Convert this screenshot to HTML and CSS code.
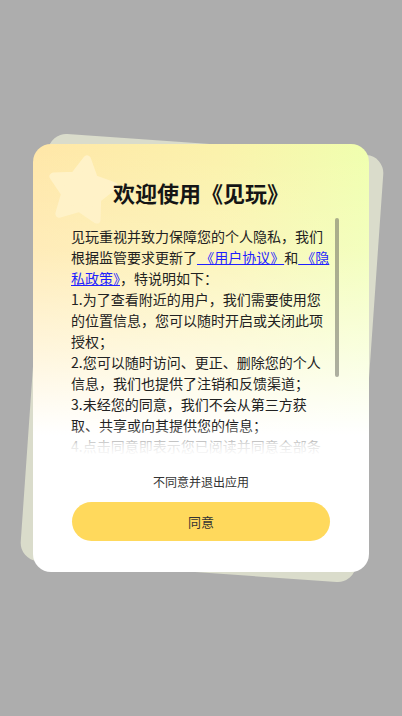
FILE: index.html
```html
<!DOCTYPE html>
<html lang="zh-CN">
<head>
<meta charset="utf-8">
<title>欢迎使用《见玩》</title>
<link rel="stylesheet" href="styles.css">
</head>
<body>
<div class="stage">
  <div class="card-back"></div>
  <div class="card">
    <svg class="star" width="90" height="90" viewBox="0 0 90 90" aria-hidden="true">
      <polygon transform="rotate(9 45 45)" points="45,13 55,31.25 75.4,35.1 61.2,50.25 63.8,70.9 45,62 26.2,70.9 28.8,50.25 14.6,35.1 35,31.25" fill="#fff2c8" stroke="#fff2c8" stroke-width="8" stroke-linejoin="round"/>
    </svg>
    <h1 class="title">欢迎使用《见玩》</h1>
    <div class="scroll">
      <div class="content">
        <p>见玩重视并致力保障您的个人隐私，我们根据监管要求更新了<a href="#" class="link"> 《用户协议》</a>和<a href="#" class="link"> 《隐私政策》</a>，特说明如下：</p>
        <p>1.为了查看附近的用户，我们需要使用您的位置信息，您可以随时开启或关闭此项授权；</p>
        <p>2.您可以随时访问、更正、删除您的个人信息，我们也提供了注销和反馈渠道；</p>
        <p>3.未经您的同意，我们不会从第三方获取、共享或向其提供您的信息；</p>
        <p>4.点击同意即表示您已阅读并同意全部条款。</p>
      </div>
      <div class="thumb"></div>
      <div class="fade"></div>
    </div>
    <div class="decline">不同意并退出应用</div>
    <button class="agree" type="button">同意</button>
  </div>
</div>
</body>
</html>
```
FILE: styles.css
```css
html, body {
  margin: 0;
  padding: 0;
}
body {
  background: #adadad;
  font-family: "Noto Sans CJK SC", "Noto Sans", sans-serif;
  width: 402px;
  height: 716px;
  overflow: hidden;
}
.stage {
  height: 716px;
  display: grid;
  place-items: center;
}
.card-back,
.card {
  grid-area: 1 / 1;
  width: 336px;
  height: 428px;
  border-radius: 18px;
  box-sizing: border-box;
}
.card-back {
  background: #dadccb;
  transform: rotate(4deg);
  margin-left: 2px;
}
.card {
  position: relative;
  overflow: hidden;
  background:
    linear-gradient(to bottom, rgba(255,255,255,0) 0%, rgba(255,255,255,0.2) 25%, rgba(255,255,255,0.6) 48%, #ffffff 68%),
    linear-gradient(to right, #ffe7a8 0%, #fbf2ab 55%, #f0ffae 100%);
  display: flex;
  flex-direction: column;
  align-items: center;
  padding: 33px 0 31px;
}
.star {
  position: absolute;
  left: 4px;
  top: 2px;
}
.title {
  position: relative;
  margin: 0;
  font-size: 22px;
  line-height: 30px;
  font-weight: bold;
  color: #151515;
}
.scroll {
  position: relative;
  width: 260px;
  height: 238px;
  margin-top: 11px;
  box-sizing: border-box;
  padding-top: 8px;
  clip-path: inset(0 -10px 0 0);
}
.content p {
  margin: 0;
  font-size: 14px;
  line-height: 21px;
  color: #222;
}
.link {
  color: #1f1fff;
  text-decoration: underline;
}
.thumb {
  position: absolute;
  right: -8px;
  top: 0;
  width: 4px;
  height: 159px;
  border-radius: 2px;
  background: rgba(110, 110, 100, 0.55);
}
.fade {
  position: absolute;
  left: 0;
  right: 0;
  bottom: 0;
  height: 30px;
  background: linear-gradient(to bottom, rgba(255,255,255,0) 0%, rgba(255,255,255,0.85) 60%, #fff 100%);
}
.decline {
  margin-top: 17px;
  font-size: 12px;
  line-height: 17px;
  color: #333;
}
.agree {
  margin-top: 12px;
  width: 258px;
  height: 39px;
  border: none;
  border-radius: 20px;
  background: #ffd95c;
  font-family: "Noto Sans CJK SC", "Noto Sans", sans-serif;
  font-size: 13px;
  color: #333;
  padding: 0;
}
```
